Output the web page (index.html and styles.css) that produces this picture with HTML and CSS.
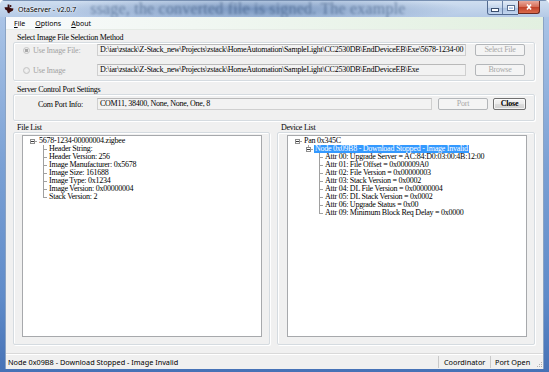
FILE: index.html
```html
<!DOCTYPE html>
<html>
<head>
<meta charset="utf-8">
<title>OtaServer - v2.0.7</title>
<link rel="stylesheet" href="styles.css">
</head>
<body>

<div class="window">

  <!-- 標題列 (aero glass) -->
  <div class="titlebar">
    <svg class="appicon" viewBox="0 0 10 10">
      <path d="M0.5 3.2 L3.6 3.2 L3.6 0.6 L5.4 0.6 L5.6 3.6 L7.4 4.2 L9.4 4.4 L9 6.4 L7.2 7.4 L5.8 8.2 L5.2 9.6 L3.6 8.4 L3 6.4 L1.2 5.4 Z" fill="#3a0c0c"/>
      <circle cx="6.6" cy="2" r="0.9" fill="#3a0c0c"/>
    </svg>
    <span class="title">OtaServer - v2.0.7</span>
    <span class="ghost">ssage, the converted file is signed. The example</span>
    <div class="capbtns">
      <div class="capgroup">
        <span class="cb cb-min"><i></i></span>
        <span class="cb cb-max"><i></i></span>
      </div>
      <span class="cb cb-close">
        <svg viewBox="0 0 10 8"><path d="M3 1.5 L7 6.5 M7 1.5 L3 6.5" stroke="#fff" stroke-width="1.6"/></svg>
      </span>
    </div>
  </div>

  <div class="client">
    <div class="menubar">
      <span><u>F</u>ile</span>
      <span><u>O</u>ptions</span>
      <span><u>A</u>bout</span>
    </div>

    <div class="content">
      <div class="gtitle">Select Image File Selection Method</div>
      <div class="group g-image">
        <div class="frow">
          <span class="radio checked"></span>
          <span class="lbl dis">Use Image File:</span>
          <div class="tbox">D:\iar\zstack\Z-Stack_new\Projects\zstack\HomeAutomation\SampleLight\CC2530DB\EndDeviceEB\Exe\5678-1234-00</div>
          <span class="btn dis">Select File</span>
        </div>
        <div class="frow">
          <span class="radio"></span>
          <span class="lbl dis">Use Image</span>
          <div class="tbox">D:\iar\zstack\Z-Stack_new\Projects\zstack\HomeAutomation\SampleLight\CC2530DB\EndDeviceEB\Exe</div>
          <span class="btn dis">Browse</span>
        </div>
      </div>

      <div class="gtitle">Server Control Port Settings</div>
      <div class="group g-port">
        <div class="frow">
          <span class="lbl lbl-port">Com Port Info:</span>
          <div class="tbox tbox-port">COM11, 38400, None, None, One, 8</div>
          <span class="btn dis btn-port">Port</span>
          <span class="btn btn-close">Close</span>
        </div>
      </div>

      <div class="lists">
        <div class="lcol lcol-file">
          <div class="gtitle">File List</div>
          <div class="group g-list">
            <div class="treebox">
              <div class="row l0"><span class="cell exp"><b></b></span><span class="txt">5678-1234-00000004.zigbee</span></div>
              <div class="row l1"><span class="cell leaf"></span><span class="txt">Header String:</span></div>
              <div class="row l1"><span class="cell leaf"></span><span class="txt">Header Version: 256</span></div>
              <div class="row l1"><span class="cell leaf"></span><span class="txt">Image Manufacturer: 0x5678</span></div>
              <div class="row l1"><span class="cell leaf"></span><span class="txt">Image Size: 161688</span></div>
              <div class="row l1"><span class="cell leaf"></span><span class="txt">Image Type: 0x1234</span></div>
              <div class="row l1"><span class="cell leaf"></span><span class="txt">Image Version: 0x00000004</span></div>
              <div class="row l1"><span class="cell leaf last"></span><span class="txt">Stack Version: 2</span></div>
            </div>
          </div>
        </div>

        <div class="lcol lcol-dev">
          <div class="gtitle">Device List</div>
          <div class="group g-list g-dev">
            <div class="treebox">
              <div class="row l0"><span class="cell exp"><b></b></span><span class="txt">Pan 0x345C</span></div>
              <div class="row l1"><span class="cell exp sub"><b></b></span><span class="txt sel">Node 0x09B8 - Download Stopped - Image Invalid</span></div>
              <div class="row l2"><span class="cell leaf"></span><span class="txt">Attr 00: Upgrade Server = AC:84:D0:03:00:4B:12:00</span></div>
              <div class="row l2"><span class="cell leaf"></span><span class="txt">Attr 01: File Offset = 0x000009A0</span></div>
              <div class="row l2"><span class="cell leaf"></span><span class="txt">Attr 02: File Version = 0x00000003</span></div>
              <div class="row l2"><span class="cell leaf"></span><span class="txt">Attr 03: Stack Version = 0x0002</span></div>
              <div class="row l2"><span class="cell leaf"></span><span class="txt">Attr 04: DL File Version = 0x00000004</span></div>
              <div class="row l2"><span class="cell leaf"></span><span class="txt">Attr 05: DL Stack Version = 0x0002</span></div>
              <div class="row l2"><span class="cell leaf"></span><span class="txt">Attr 06: Upgrade Status = 0x00</span></div>
              <div class="row l2"><span class="cell leaf last"></span><span class="txt">Attr 09: Minimum Block Req Delay = 0x0000</span></div>
            </div>
          </div>
        </div>
      </div>
    </div>

    <div class="statusbar">
      <span class="spanel spanel-main">Node 0x09B8 - Download Stopped - Image Invalid</span>
      <span class="spanel spanel-role">Coordinator</span>
      <span class="spanel spanel-port">Port Open</span>
      <svg class="grip" viewBox="0 0 7 7">
        <rect x="5" y="1" width="1" height="1" fill="#b0b0b0"/>
        <rect x="3" y="3" width="1" height="1" fill="#b0b0b0"/>
        <rect x="5" y="3" width="1" height="1" fill="#b0b0b0"/>
        <rect x="1" y="5" width="1" height="1" fill="#b0b0b0"/>
        <rect x="3" y="5" width="1" height="1" fill="#b0b0b0"/>
        <rect x="5" y="5" width="1" height="1" fill="#b0b0b0"/>
      </svg>
    </div>
  </div>

</div>

</body>
</html>
```

FILE: styles.css
```css
/*
 OtaServer 主視窗 (Win7 aero 外框)
 所有尺寸照截圖縮放後的比例
*/

* {
  box-sizing: border-box;
}

body {
  margin: 0;
  background: #fff;
}

.window {
  width: 549px;
  height: 372px;
  padding: 0 5px 3px;
  display: flex;
  flex-direction: column;
  background: linear-gradient(to bottom, #c3d5ec 0px, #a9c3e6 20px, #7aa0d4 45%, #5f8bc9 80%, #4672b6 100%);
  border-radius: 5px 5px 0 0;
  overflow: hidden;
}

/* 標題列 */
.titlebar {
  height: 17px;
  margin: 0 -5px;
  padding-left: 4px;
  display: flex;
  align-items: center;
  overflow: hidden;
  background:
    radial-gradient(ellipse 210px 14px at 255px 8px, rgba(50, 90, 150, 0.5), rgba(50, 90, 150, 0) 100%),
    linear-gradient(to bottom, #cfdef0, #b5cae6);
  border-top: 1px solid #7890b2;
}

.appicon {
  width: 10px;
  height: 10px;
  flex: none;
}

.title {
  margin-left: 4px;
  font: 7px "Noto Sans", sans-serif;
  color: #000;
  text-shadow: 0 0 3px #fff, 0 0 2px #fff;
  white-space: nowrap;
  flex: none;
}

/* 玻璃後面的模糊文字 */
.ghost {
  margin-left: 14px;
  font: 16px/16px "Liberation Serif", serif;
  letter-spacing: 0.2px;
  color: #17355f;
  opacity: 0.45;
  filter: blur(1px);
  white-space: nowrap;
  flex: none;
}

.capbtns {
  margin-left: auto;
  margin-right: 9px;
  align-self: flex-start;
  display: flex;
  flex: none;
}

.capgroup {
  display: flex;
  border: 1px solid #51698f;
  border-top: none;
  border-right: none;
  border-radius: 0 0 0 3px;
  overflow: hidden;
}

.cb {
  height: 13px;
  display: flex;
  align-items: center;
  justify-content: center;
}

.cb-min,
.cb-max {
  width: 15px;
  background: linear-gradient(to bottom, #e3ecf7, #c5d6ec 50%, #a9c0e0 51%, #c3d6ef);
}

.cb-min {
  border-right: 1px solid #6a82a8;
}

.cb-min i {
  width: 6px;
  height: 2px;
  margin-top: 4px;
  background: #fff;
  border: 1px solid #3b4f6e;
  box-sizing: content-box;
}

.cb-max i {
  width: 6px;
  height: 4px;
  border: 1px solid #fff;
  outline: 1px solid #5a6f90;
}

.cb-close {
  width: 22px;
  border: 1px solid #6b2a22;
  border-top: none;
  border-radius: 0 0 3px 0;
  background: linear-gradient(to bottom, #e9a99c, #d56b55 50%, #c0402a 51%, #d96b4a);
}

.cb-close svg {
  width: 10px;
  height: 8px;
}

/* 內容區 */
.client {
  flex: 1;
  display: flex;
  flex-direction: column;
  background: #f0f0f0;
  border: 1px solid #8aa3c4;
  border-top: none;
  border-bottom: none;
}

.menubar {
  height: 13px;
  padding-left: 8px;
  display: flex;
  align-items: center;
  gap: 10px;
  font: 7px "Noto Sans", sans-serif;
  color: #000;
  background: linear-gradient(to right, #f8fafc 0%, #f1f7f2 35%, #e2f0e0 100%);
  border-bottom: 1px solid #e6ebe6;
}

.menubar u {
  text-decoration-thickness: 1px;
  text-underline-offset: 1px;
}

.content {
  padding: 3px 8px 0 7px;
  font: 8px "Liberation Serif", serif;
  letter-spacing: -0.25px;
  color: #000;
}

.gtitle {
  height: 9px;
  line-height: 9px;
  padding-left: 4px;
  white-space: nowrap;
}

.group {
  border: 1px solid #d5dbe0;
  border-radius: 2px;
  box-shadow: inset 1px 1px 0 #fff, 1px 1px 0 #fff;
}

.g-image {
  height: 39px;
  padding: 1px 9px 0 9px;
  display: flex;
  flex-direction: column;
  gap: 8px;
  margin-bottom: 4px;
}

.g-port {
  height: 27px;
  padding: 3px 9px 0 9px;
  margin-bottom: 2px;
}

.frow {
  height: 12px;
  display: flex;
  align-items: center;
}

.radio {
  width: 7px;
  height: 7px;
  flex: none;
  border-radius: 50%;
  border: 1px solid #c4c4c4;
  background: radial-gradient(circle, #f4f4f4, #e2e2e2);
  margin-right: 3px;
}

.radio.checked {
  background: radial-gradient(circle, #a8a8a8 0, #a8a8a8 1.4px, #ececec 1.8px);
}

.lbl {
  width: 64px;
  flex: none;
  white-space: nowrap;
}

.lbl.dis {
  color: #a3a3a3;
}

.lbl-port {
  width: 59px;
  margin-left: 15px;
}

.tbox {
  width: 369px;
  height: 12px;
  flex: none;
  padding: 0 2px;
  line-height: 10px;
  white-space: nowrap;
  overflow: hidden;
  background: #f2f2f2;
  border: 1px solid #cfcfcf;
  border-top-color: #b9b9b9;
}

.tbox-port {
  width: 335px;
}

.btn {
  width: 50px;
  height: 12px;
  flex: none;
  margin-left: 9px;
  line-height: 10px;
  text-align: center;
  border: 1px solid #b3b6b9;
  border-radius: 2px;
  background: #f4f4f4;
  white-space: nowrap;
}

.btn.dis {
  color: #a8a8a8;
}

.btn-port {
  margin-left: 6px;
}

.btn-close {
  width: 33px;
  margin-left: 5px;
  color: #000;
  font-weight: bold;
  border-color: #707070;
  background: linear-gradient(to bottom, #f4f4f4, #ebebeb 50%, #dddddd 51%, #d0d0d0);
  box-shadow: inset 0 0 0 1px rgba(255, 255, 255, 0.7);
}

/* 下方兩個清單 */
.lists {
  display: flex;
  gap: 7px;
}

.lcol-file {
  width: 257px;
}

.lcol-dev {
  flex: 1;
}

.g-list {
  height: 213px;
  padding: 2px 7px 7px 8px;
}

.g-dev {
  padding-left: 9px;
}

.treebox {
  height: 100%;
  padding-top: 1px;
  background: #fff;
  border: 1px solid #a7a9ac;
  overflow: hidden;
}

/* tree 每列 8px 高，連接線用背景漸層畫 */
.row {
  height: 8px;
  display: flex;
  align-items: center;
  white-space: nowrap;
}

.l0 { padding-left: 5px; }
.l1 { padding-left: 16px; }
.l2 { padding-left: 27px; }

.cell {
  height: 8px;
  flex: none;
}

.leaf {
  width: 9px;
  background:
    linear-gradient(#a0a0a0, #a0a0a0) 4px 0 / 1px 8px no-repeat,
    linear-gradient(#a0a0a0, #a0a0a0) 4px 4px / 4px 1px no-repeat;
}

.leaf.last {
  background:
    linear-gradient(#a0a0a0, #a0a0a0) 4px 0 / 1px 5px no-repeat,
    linear-gradient(#a0a0a0, #a0a0a0) 4px 4px / 4px 1px no-repeat;
}

.exp {
  width: 10px;
  display: flex;
  align-items: center;
  padding-left: 2px;
  background: linear-gradient(#a0a0a0, #a0a0a0) 7px 4px / 2px 1px no-repeat;
}

.exp.sub {
  background:
    linear-gradient(#a0a0a0, #a0a0a0) 4px 0 / 1px 2px no-repeat,
    linear-gradient(#a0a0a0, #a0a0a0) 7px 4px / 2px 1px no-repeat;
}

.exp b {
  width: 5px;
  height: 5px;
  margin-top: 1px;
  border: 1px solid #8f8f8f;
  background: linear-gradient(#3a3a3a, #3a3a3a) center / 3px 1px no-repeat, #fff;
}

.txt {
  display: block;
  height: 8px;
  line-height: 8px;
  padding: 0 1px;
}

.txt.sel {
  color: #fff;
  background: #3399ff;
}

/* 狀態列 */
.statusbar {
  height: 16px;
  margin-top: 8px;
  display: flex;
  align-items: center;
  font: 7.3px "Noto Sans", sans-serif;
  color: #000;
  background: #f0f0f0;
  border-top: 1px solid #d9d9d9;
  box-shadow: inset 0 1px 0 #fff;
}

.spanel {
  white-space: nowrap;
  line-height: 12px;
}

.spanel-main {
  flex: 1;
  padding-left: 2px;
}

.spanel-role {
  width: 52px;
  padding-left: 5px;
  border-left: 1px solid #c9c9c9;
}

.spanel-port {
  width: 46px;
  padding-left: 4px;
  border-left: 1px solid #c9c9c9;
}

.grip {
  width: 7px;
  height: 7px;
  align-self: flex-end;
  margin-bottom: 1px;
}
```
